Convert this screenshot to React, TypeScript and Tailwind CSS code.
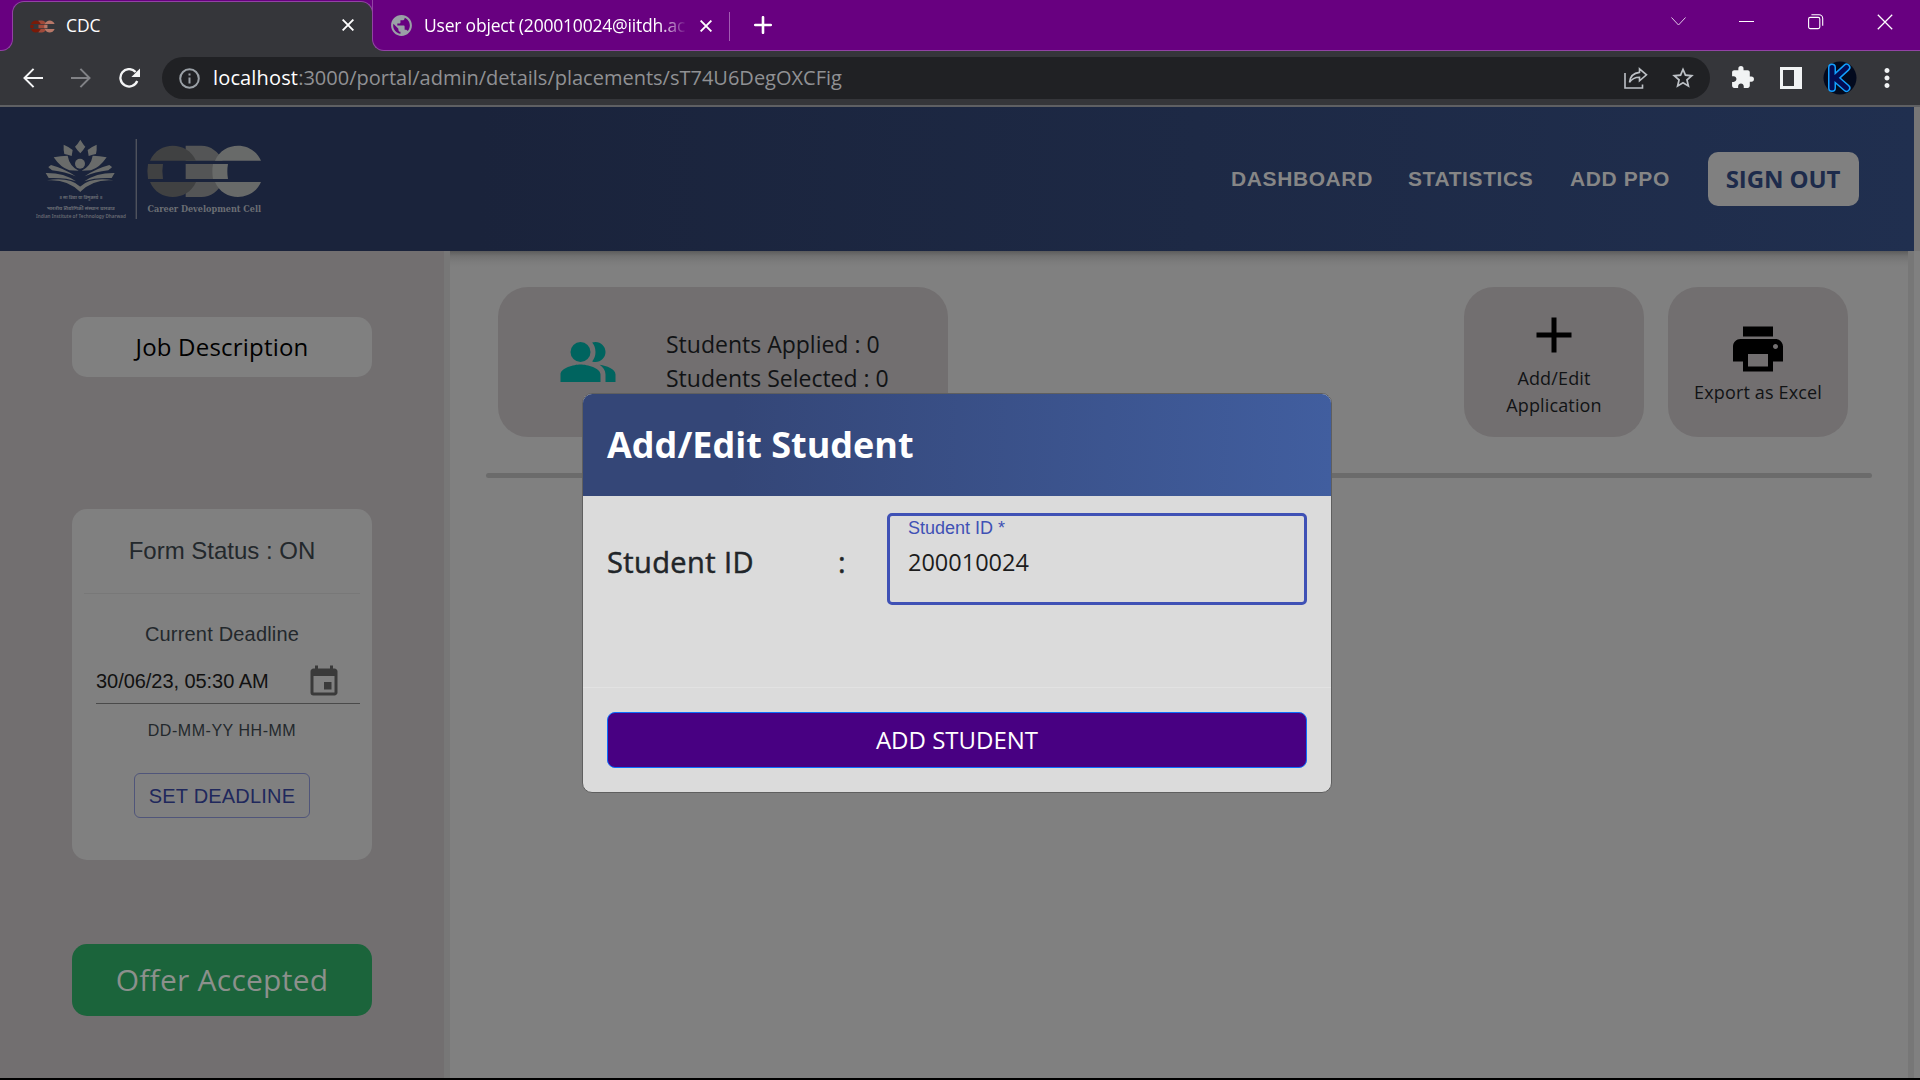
import type { ReactNode } from "react";
import { MdAdd, MdEvent, MdPeopleAlt, MdPrint, MdExtension, MdPublic, MdMoreVert, MdStarOutline } from "react-icons/md";

function Cross({ size, width, className }: { size: number; width: number; className?: string }) {
  return (
    <svg width={size} height={size} viewBox="0 0 12 12" className={className} fill="none" stroke="currentColor" strokeWidth={width}>
      <path d="M.6.6l10.8 10.8M11.4.6L.6 11.4" />
    </svg>
  );
}

function LinkedRings({ a, b, c }: { a: string; b: string; c: string }) {
  return (
    <g>
      <path fill={b} d="M557 137H604C632 137 656 155 668 182H557ZM557 291H604C632 291 656 273 668 246H557ZM557 192H660V237H557Z" />
      <path fill={a} d="M450 182C475 122 562 122 588 182ZM450 246C475 306 562 306 588 246ZM444 192H489Q485 214 489 237H444Q440 214 444 192Z" />
      <path fill={c} d="M645 182C670 122 758 122 783 182ZM645 246C670 306 758 306 783 246ZM639 192H684Q680 214 684 237H639Q635 214 639 192Z" />
    </g>
  );
}

function Logo() {
  return (
    <svg width="240" height="90" viewBox="90 105 720 270">
      <g fill="#696b6a">
        <path d="M241 119Q251 135 256 140Q250 150 241 160Q231 150 225 140Q232 134 241 119Z" />
        <circle cx="240" cy="191" r="15" />
        <g id="half">
          <path d="M191 134Q206 140 218 150L215 168Q202 163 193 162Q190 149 191 134Z" />
          <path d="M161 172Q182 167 203 167Q208 198 236 212Q222 212 208 211Q182 203 161 172Z" />
          <path d="M153 195Q192 205 227 229Q196 216 156 211Q146 203 145 201Z" />
          <path d="M137 219Q192 218 228 244Q198 232 146 234Z" />
          <path d="M141 241Q208 230 241 260V276Q202 236 141 241Z" />
        </g>
        <use href="#half" transform="translate(481 0) scale(-1 1)" />
      </g>
      <g fill="#686b73" textAnchor="middle" fontFamily="'Noto Sans', 'Open Sans', sans-serif">
        <text x="242" y="297" fontSize="15" textLength="130" lengthAdjust="spacingAndGlyphs">॥ सा विद्या या विमुक्तये ॥</text>
        <text x="242" y="331" fontSize="16" textLength="204" lengthAdjust="spacingAndGlyphs">भारतीय प्रौद्योगिकी संस्थान धारवाड</text>
        <text x="243" y="353" fontSize="13" fontWeight="600" textLength="270" lengthAdjust="spacingAndGlyphs">Indian Institute of Technology Dharwad</text>
      </g>
      <rect x="407" y="117" width="3.5" height="240" fill="#5a5d65" />
      <LinkedRings a="#404142" b="#545556" c="#686a69" />
      <text x="613" y="335" textAnchor="middle" fill="#6b6e74" fontSize="27" fontWeight="700" fontFamily="'DejaVu Serif Condensed', 'DejaVu Serif', serif" textLength="341" lengthAdjust="spacingAndGlyphs">
        Career Development Cell
      </text>
    </svg>
  );
}

function TabStrip() {
  return (
    <div className="flex h-[51px] bg-[#35363a] text-[17.5px] text-white">
      <div className="h-[51px] w-[13px] rounded-br-[12px] border-r border-b border-[#9243a4] bg-[#680080]" />
      <div className="-ml-px h-[51px] w-[361px] bg-[linear-gradient(#680080_16px,transparent_16px)] pt-px">
        <div className="flex h-[38px] items-start rounded-t-[12px] border-x border-t border-[#9243a4] bg-[#35363a]">
          <svg width="25" height="13" viewBox="438 132 350 164" preserveAspectRatio="none" className="mt-[18px] ml-[17px]">
            <LinkedRings a="#7a1a08" b="#a04a3a" c="#b87868" />
          </svg>
          <span className="mt-[10px] ml-[11px] leading-[26px] tracking-[-0.1px]">CDC</span>
          <Cross size={12} width={1.9} className="mt-[17px] mr-[18px] ml-auto" />
        </div>
      </div>
      <div className="-ml-px flex h-[51px] flex-1 items-start rounded-bl-[12px] border-b border-l border-[#9243a4] bg-[#680080]">
        <MdPublic size={25} className="mt-[13px] ml-[16px] text-[#9aa0a6]" />
        <div className="mt-[12px] ml-[10px] w-[263px] overflow-hidden leading-[26px] tracking-[-0.2px] whitespace-nowrap [mask-image:linear-gradient(to_right,#000_235px,transparent_263px)]">
          User object (200010024@iitdh.ac.in)
        </div>
        <Cross size={12} width={1.9} className="mt-[20px] ml-[13px]" />
        <div className="mt-[12px] ml-[17px] h-[29px] w-px bg-[#a35cb3]" />
        <svg width="18" height="18" viewBox="0 0 18 18" className="mt-[16px] ml-[24px]" stroke="#fff" strokeWidth="2.6" strokeLinecap="round">
          <path d="M9 1.2v15.6M1.2 9h15.6" />
        </svg>
        <div className="mr-[27px] ml-auto flex items-start">
          <svg width="15" height="9" viewBox="0 0 15 9" className="mt-[17px]" fill="none" stroke="#e0c8e6">
            <path d="M.5.5l7 7.5 7-7.5" />
          </svg>
          <div className="mt-[21px] ml-[53px] h-px w-[15px] bg-white" />
          <svg width="16" height="16" viewBox="0 0 16 16" className="mt-[14px] ml-[54px]" fill="none" stroke="#fff" strokeWidth="1.1">
            <rect x=".6" y="3.4" width="11.2" height="11.2" rx="1.6" />
            <path d="M3.4.7h7.6a3.7 3.7 0 0 1 3.7 3.7v7.4" />
          </svg>
          <Cross size={16} width={0.95} className="mt-[14px] ml-[53px]" />
        </div>
      </div>
    </div>
  );
}

function Toolbar() {
  return (
    <div className="flex h-[56px] items-start border-b-2 border-[#5f6063] bg-[#35363a]">
      <svg width="20" height="20" viewBox="0 0 20 20" className="mt-[17px] ml-[23px]" fill="none" stroke="#f4f5f6" strokeWidth="2">
        <path d="M20 10H1.6M10.6.9L1.5 10l9.1 9.1" />
      </svg>
      <svg width="20" height="20" viewBox="0 0 20 20" className="mt-[17px] ml-[28px]" fill="none" stroke="#818286" strokeWidth="2">
        <path d="M0 10h18.4M9.4.9l9.1 9.1-9.1 9.1" />
      </svg>
      <svg width="21" height="20" viewBox="0 0 21 20" className="mt-[17px] ml-[28px]">
        <path d="M16.6 4A8.7 8.7 0 1 0 18.2 13" fill="none" stroke="#f4f5f6" strokeWidth="2.3" />
        <path d="M21 .5v8.6h-8.6z" fill="#f4f5f6" />
      </svg>
      <div className="mt-[6px] ml-[22px] flex h-[42px] w-[1548px] items-center rounded-full bg-[#202124] pr-[14px] pl-[17px]">
        <svg width="21" height="21" viewBox="0 0 21 21" fill="none" stroke="#9aa0a6" strokeWidth="2">
          <circle cx="10.5" cy="10.5" r="9.3" />
          <path d="M10.5 9.4v6M10.5 5.4v2.2" />
        </svg>
        <span className="ml-[13px] text-[20px] leading-[30px] whitespace-nowrap text-[#909194]">
          <span className="tracking-[0.15px] text-white">localhost</span>:3000/portal/admin/details/placements/sT74U6DegOXCFig
        </span>
        <svg width="24" height="22" viewBox="0 0 24 22" className="ml-auto" fill="none" stroke="#bdc1c6" strokeWidth="1.6">
          <path d="M1 6v15h17.5v-3.500" />
          <path d="M15.500 1.800l7 6-7 6v-3.600c-4.500 0-7.800 1.400-10 5.200.600-6 4.300-9.400 10-10z" />
        </svg>
        <MdStarOutline size={26} className="ml-[22px] text-[#bdc1c6]" />
      </div>
      <MdExtension size={25} className="mt-[14px] ml-[20px] text-[#f1f3f4]" />
      <div className="mt-[16px] ml-[25px] h-[22px] w-[22px] border-[3px] border-r-[8px] border-[#f1f3f4]" />
      <svg width="34" height="34" viewBox="0 0 34 34" className="mt-[10px] ml-[21px]">
        <circle cx="17" cy="17" r="16.500" fill="#030a1e" />
        <g fill="none" strokeLinecap="round" strokeLinejoin="round">
          <path d="M9 6.500v20.500M23.500 6.500L12 17l11.500 10" stroke="#12a0ff" strokeWidth="8" />
          <path d="M9 6.500v20.500M23.500 6.500L12 17l11.500 10" stroke="#030c55" strokeWidth="5" />
        </g>
      </svg>
      <MdMoreVert size={30} className="mt-[12px] ml-[15px] text-[#f1f3f4]" />
    </div>
  );
}

function Navbar() {
  return (
    <header className="relative z-10 flex h-[144px] w-[1914px] items-start bg-[linear-gradient(90deg,#1a233b_25%,#202f4f_100%)] font-['Liberation_Sans',sans-serif] text-[21px] leading-6 font-bold text-[#868686]">
      <div className="mt-[28px] ml-[30px]">
        <Logo />
      </div>
      <nav className="mt-[60px] ml-auto flex whitespace-nowrap">
        <span className="w-[177px] tracking-[0.6px]">DASHBOARD</span>
        <span className="w-[162px] tracking-[0.6px]">STATISTICS</span>
        <span className="w-[138px] tracking-[0.6px]">ADD PPO</span>
      </nav>
      <button className="mt-[45px] mr-[55px] h-[54px] w-[151px] rounded-[10px] bg-[#808080] pr-px font-['Open_Sans',sans-serif] text-[24px] font-bold tracking-[-0.1px] whitespace-nowrap text-[#1d2b4b]">
        SIGN OUT
      </button>
    </header>
  );
}

function Sidebar() {
  return (
    <aside className="w-[444px] bg-[#726f70] px-[72px]">
      <button className="mt-[66px] block h-[60px] w-[300px] rounded-[15px] bg-[#808080] text-[24px] tracking-[0.2px] text-black">Job Description</button>
      <section className="mt-[132px] flex h-[351px] w-[300px] flex-col rounded-[15px] bg-[#808080] px-3 text-center font-['Liberation_Sans',sans-serif] text-[#23282c]">
        <h2 className="mt-[26px] text-[24px] leading-8">Form Status : ON</h2>
        <div className="mt-[26px] h-px bg-[#787878]" />
        <p className="mt-[27px] text-[20px] leading-[26px] tracking-[0.19px]">Current Deadline</p>
        <div className="mt-[7px] ml-[12px] flex h-[50px] items-center border-b border-[#4a4a4a] text-[20px] tracking-[-0.05px] whitespace-nowrap text-[#111]">
          <span className="mt-[4px]">30/06/23, 05:30 AM</span>
          <MdEvent size={36} className="mt-[7px] mr-[18px] ml-auto text-[#3a3a3a]" />
        </div>
        <p className="mt-[16px] text-[16px] leading-[22px] tracking-[0.53px]">DD-MM-YY HH-MM</p>
        <button className="mx-auto mt-[31px] h-[45px] w-[176px] rounded-[6px] border border-[#50557a] text-[20px] tracking-[0.2px] whitespace-nowrap text-[#20285c]">SET DEADLINE</button>
      </section>
      <button className="mt-[84px] block h-[72px] w-[300px] rounded-[15px] bg-[#1b643b] pb-[2px] text-[30px] tracking-[0.25px] text-[#8c908c]">Offer Accepted</button>
    </aside>
  );
}

function ActionCard({ children }: { children: ReactNode }) {
  return (
    <div className="flex h-[150px] w-[180px] flex-col items-center justify-center rounded-[30px] bg-[#726f70] text-center text-[18px] leading-[27px] tracking-[0.15px] text-[#111315]">
      {children}
    </div>
  );
}

function Main() {
  return (
    <main className="w-[1458px] bg-[linear-gradient(#5c5c5c,#717171_5px,#7c7c7c_11px,#808080_16px)] pt-9">
      <div className="flex px-12">
        <div className="flex h-[150px] w-[450px] items-center rounded-[30px] bg-[#726f70] pl-[60px] text-[23px] leading-[34px] whitespace-nowrap text-[#111315]">
          <MdPeopleAlt size={60} className="text-[#00645f]" />
          <div className="mb-[2px] ml-[48px]">
            <p>Students Applied : 0</p>
            <p>Students Selected : 0</p>
          </div>
        </div>
        <div className="mr-[12px] ml-auto flex gap-6">
          <ActionCard>
            <MdAdd size={60} className="text-black" />
            <span className="w-[110px]">Add/Edit Application</span>
          </ActionCard>
          <ActionCard>
            <MdPrint size={60} className="text-black" />
            <span>Export as Excel</span>
          </ActionCard>
        </div>
      </div>
      <div className="mt-9 ml-9 h-[5px] w-[1386px] rounded-full bg-[#6b6b6b]" />
    </main>
  );
}

function StudentDialog() {
  return (
    <div className="absolute top-[393px] left-[582px] w-[750px] overflow-hidden rounded-[10px] border border-[#5f5f5f] bg-[#dbdbdb] text-[#212529]">
      <h1 className="h-[102px] bg-[linear-gradient(92deg,#344677_20%,#415e9f_100%)] pt-[27px] pl-6 text-[36px] leading-[48px] font-bold text-white">Add/Edit Student</h1>
      <div className="flex h-[192px] items-start border-b border-[#e2e2e2] px-6 pt-[17px]">
        <span className="mt-[29px] w-[231px] text-[29px] leading-10 font-medium tracking-[0.4px] [-webkit-text-stroke:0.5px_#212529]">Student ID</span>
        <span className="mt-[29px] w-[49px] text-[29px] leading-10 font-medium [-webkit-text-stroke:0.5px_#212529]">:</span>
        <div className="h-[92px] w-[420px] rounded-[5px] border-[3px] border-[#3f51b5] pt-[2px] pl-[18px]">
          <p className="font-['Liberation_Sans',sans-serif] text-[18px] leading-5 text-[#3f51b5]">Student ID *</p>
          <p className="mt-[8px] text-[23.5px] leading-8 text-[#1c1c1c]">200010024</p>
        </div>
      </div>
      <div className="p-6">
        <button className="block h-[56px] w-[700px] rounded-[8px] border border-[#0d6efd] bg-[#480082] text-[24px] text-white">ADD STUDENT</button>
      </div>
    </div>
  );
}

export default function App() {
  return (
    <div className="relative flex h-[1080px] w-[1920px] flex-col overflow-hidden border-b-2 border-black bg-[#777676] font-['Open_Sans',sans-serif]">
      <TabStrip />
      <Toolbar />
      <Navbar />
      <div className="flex flex-1">
        <Sidebar />
        <div className="w-[6px] bg-[#777777]" />
        <Main />
        <div className="w-[6px] bg-[#777777]" />
        <div className="w-[6px] bg-[#808080]" />
      </div>
      <StudentDialog />
    </div>
  );
}
